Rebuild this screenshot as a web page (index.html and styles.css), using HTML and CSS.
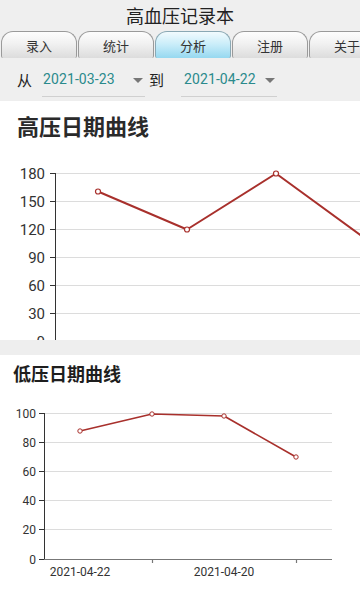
FILE: index.html
```html
<!DOCTYPE html>
<html lang="zh">
<head>
<meta charset="utf-8">
<title>高血压记录本</title>
<link rel="stylesheet" href="styles.css">
</head>
<body>
<div class="app">
  <header class="header">高血压记录本</header>
  <nav class="tabs">
    <div class="tab">录入</div>
    <div class="tab">统计</div>
    <div class="tab active">分析</div>
    <div class="tab">注册</div>
    <div class="tab">关于</div>
  </nav>
  <div class="range">
    <span class="lbl">从</span>
    <div class="picker p1"><span class="date">2021-03-23</span><span class="caret"></span></div>
    <span class="lbl to">到</span>
    <div class="picker p2"><span class="date">2021-04-22</span><span class="caret"></span></div>
  </div>
  <section class="card card1">
    <h2 class="title1">高压日期曲线</h2>
    <svg class="chart1" width="360" height="193" viewBox="0 0 360 193">
      <g stroke="#dcdcdc" stroke-width="1">
        <line x1="55" y1="26.5" x2="360" y2="26.5"/>
        <line x1="55" y1="54.5" x2="360" y2="54.5"/>
        <line x1="55" y1="82.5" x2="360" y2="82.5"/>
        <line x1="55" y1="110.5" x2="360" y2="110.5"/>
        <line x1="55" y1="138.5" x2="360" y2="138.5"/>
        <line x1="55" y1="166.5" x2="360" y2="166.5"/>
      </g>
      <g stroke="#333" stroke-width="1">
        <line x1="55.5" y1="26" x2="55.5" y2="195"/>
        <line x1="50" y1="26.5" x2="55" y2="26.5"/>
        <line x1="50" y1="54.5" x2="55" y2="54.5"/>
        <line x1="50" y1="82.5" x2="55" y2="82.5"/>
        <line x1="50" y1="110.5" x2="55" y2="110.5"/>
        <line x1="50" y1="138.5" x2="55" y2="138.5"/>
        <line x1="50" y1="166.5" x2="55" y2="166.5"/>
      </g>
      <g class="ylab1" text-anchor="end">
        <text x="45" y="31.5">180</text>
        <text x="45" y="59.5">150</text>
        <text x="45" y="87.5">120</text>
        <text x="45" y="115.5">90</text>
        <text x="45" y="143.5">60</text>
        <text x="45" y="171.5">30</text>
        <text x="45" y="199.5">0</text>
      </g>
      <polyline points="98,44.5 187,82.5 276,26.5 365,91.5" fill="none" stroke="#a8302c" stroke-width="2" stroke-linejoin="round"/>
      <g fill="#fff" stroke="#a8302c" stroke-width="1.2">
        <circle cx="98" cy="44.5" r="2.5"/>
        <circle cx="187" cy="82.5" r="2.5"/>
        <circle cx="276" cy="26.5" r="2.5"/>
      </g>
    </svg>
  </section>
  <section class="card card2">
    <h2 class="title2">低压日期曲线</h2>
    <svg class="chart2" width="360" height="210" viewBox="0 0 360 210">
      <g stroke="#dcdcdc" stroke-width="1">
        <line x1="44" y1="23.5" x2="332" y2="23.5"/>
        <line x1="44" y1="52.5" x2="332" y2="52.5"/>
        <line x1="44" y1="81.5" x2="332" y2="81.5"/>
        <line x1="44" y1="110.5" x2="332" y2="110.5"/>
        <line x1="44" y1="139.5" x2="332" y2="139.5"/>
      </g>
      <g stroke="#333" stroke-width="1">
        <line x1="44.5" y1="23" x2="44.5" y2="169"/>
        <line x1="39" y1="23.5" x2="44" y2="23.5"/>
        <line x1="39" y1="52.5" x2="44" y2="52.5"/>
        <line x1="39" y1="81.5" x2="44" y2="81.5"/>
        <line x1="39" y1="110.5" x2="44" y2="110.5"/>
        <line x1="39" y1="139.5" x2="44" y2="139.5"/>
        <line x1="39" y1="169.5" x2="44" y2="169.5"/>
      </g>
      <g stroke="#777" stroke-width="1.2">
        <line x1="44" y1="169.5" x2="332" y2="169.5"/>
        <line x1="152.5" y1="169" x2="152.5" y2="173"/>
        <line x1="296.5" y1="169" x2="296.5" y2="173"/>
      </g>
      <g class="ylab2" text-anchor="end">
        <text x="36" y="27.5">100</text>
        <text x="36" y="56.5">80</text>
        <text x="36" y="85.5">60</text>
        <text x="36" y="114.5">40</text>
        <text x="36" y="143.5">20</text>
        <text x="36" y="173.5">0</text>
      </g>
      <g class="xlab" text-anchor="middle">
        <text x="80" y="186">2021-04-22</text>
        <text x="224" y="186">2021-04-20</text>
      </g>
      <polyline points="80,41 152,24 224,26 296,67" fill="none" stroke="#a8302c" stroke-width="1.6" stroke-linejoin="round"/>
      <g fill="#fff" stroke="#a8302c" stroke-width="1">
        <circle cx="80" cy="41" r="2.2"/>
        <circle cx="152" cy="24" r="2.2"/>
        <circle cx="224" cy="26" r="2.2"/>
        <circle cx="296" cy="67" r="2.2"/>
      </g>
    </svg>
  </section>
</div>
</body>
</html>
```
FILE: styles.css
```css
html, body {
  margin: 0;
  padding: 0;
}
body {
  width: 360px;
  height: 600px;
  overflow: hidden;
  background: #eeeeee;
  font-family: "Noto Sans CJK SC", "Noto Sans", Roboto, sans-serif;
  color: #222;
}
.app {
  display: flex;
  flex-direction: column;
  width: 360px;
  height: 600px;
  overflow: hidden;
}
.header {
  height: 31px;
  line-height: 30px;
  text-align: center;
  font-size: 18px;
  color: #222;
  background: #efefef;
}
.tabs {
  display: flex;
  gap: 1px;
  padding-left: 1px;
  height: 27px;
  overflow: hidden;
  background: #efefef;
  white-space: nowrap;
  flex-shrink: 0;
}
.tab {
  flex: 0 0 76px;
  box-sizing: border-box;
  height: 27px;
  line-height: 27px;
  text-align: center;
  font-size: 13px;
  color: #333;
  border: 1px solid #9a9a9a;
  border-bottom: none;
  border-radius: 12px 12px 2px 2px;
  background: linear-gradient(#fdfdfd, #f1f1f1 45%, #dcdcdc);
}
.tab.active {
  background: linear-gradient(#f2fbfe, #c7ecf9 50%, #96d8f0);
  border-color: #8aa8b4;
}
.range {
  display: flex;
  align-items: center;
  height: 42px;
  padding-left: 17px;
  background: #efefef;
  flex-shrink: 0;
}
.lbl {
  font-size: 15px;
  color: #222;
}
.lbl.to {
  margin-left: 4px;
}
.picker {
  display: flex;
  align-items: center;
  justify-content: space-between;
  box-sizing: border-box;
  height: 34px;
  margin-top: 1px;
  border-bottom: 1px solid #d0d0d0;
}
.p1 {
  width: 103px;
  margin-left: 10px;
  padding: 0 2px 0 1px;
}
.p2 {
  width: 96px;
  margin-left: 17px;
  padding: 0 2px 0 3px;
}
.date {
  font-family: Roboto, "Noto Sans", sans-serif;
  font-size: 14px;
  color: #2a8a8c;
  letter-spacing: 0.1px;
}
.caret {
  width: 0;
  height: 0;
  border-left: 5px solid transparent;
  border-right: 5px solid transparent;
  border-top: 5px solid #777;
  margin-top: 2px;
}
.card {
  background: #fff;
  overflow: hidden;
  flex-shrink: 0;
}
.card1 {
  margin-top: 1px;
  height: 239px;
}
.card2 {
  margin-top: 15px;
  flex: 1;
}
.title1 {
  margin: 0;
  height: 46px;
  box-sizing: border-box;
  padding: 9px 0 0 17px;
  font-size: 22px;
  line-height: 30px;
  font-weight: bold;
  color: #2a2a2a;
}
.title2 {
  margin: 0;
  height: 35px;
  box-sizing: border-box;
  padding: 5px 0 0 13px;
  font-size: 18px;
  line-height: 26px;
  font-weight: bold;
  color: #1e1e1e;
}
.chart1, .chart2 {
  display: block;
}
.ylab1 text {
  font-family: Roboto, "Noto Sans", sans-serif;
  font-size: 15px;
  fill: #333;
}
.ylab2 text, .xlab text {
  font-family: Roboto, "Noto Sans", sans-serif;
  font-size: 12px;
  fill: #333;
}
```
